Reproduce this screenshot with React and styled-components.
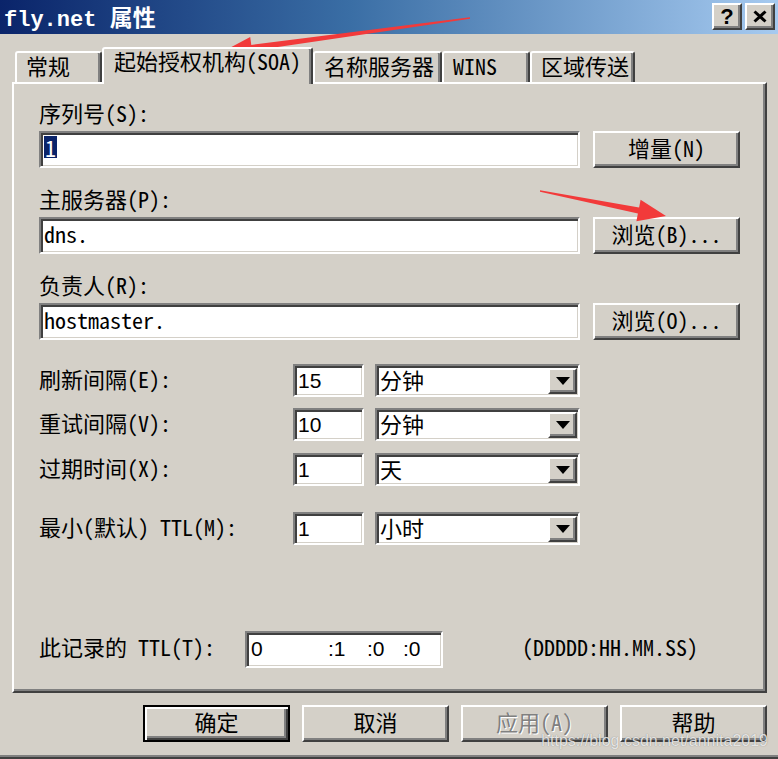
import React from 'react'
import styled, { createGlobalStyle, css } from 'styled-components'

const MONO = `"Noto Sans Mono CJK SC", "Liberation Mono", "Noto Sans CJK SC", monospace`
const SANS = `"Liberation Sans", "Noto Sans CJK SC", sans-serif`

const GlobalStyle = createGlobalStyle`
  * { box-sizing: border-box; }
  body { margin: 0; background: #d4d0c8; }
`

const raised = css`
  border: 2px solid;
  border-color: #ffffff #404040 #404040 #ffffff;
  box-shadow: inset -2px -2px #808080;
  background: #d4d0c8;
`

const sunken = css`
  border: 2px solid;
  border-color: #808080 #ffffff #ffffff #808080;
  box-shadow: inset 2px 2px #404040, inset -1px -1px #d4d0c8;
  background: #ffffff;
`

// the CJK face sits a few px low in its box, lift it
const lift = css`
  padding-bottom: 6px;
`

const Window = styled.div`
  position: relative;
  width: 778px;
  height: 759px;
  overflow: hidden;
  background: #d4d0c8;
  color: #000;
  font-family: ${MONO};
  font-size: 22px;
  box-shadow: inset 0 -2px #404040, inset 0 -4px #808080;
`

const TitleBar = styled.div`
  height: 34px;
  display: flex;
  align-items: flex-start;
  justify-content: space-between;
  padding: 0 3px 0 4px;
  background: linear-gradient(to right, #0a246a 0%, #3a6ea5 45%, #a6caf0 100%);
`

const Title = styled.div`
  color: #fff;
  font-family: "Liberation Mono", "Noto Sans CJK SC", monospace;
  font-weight: bold;
  font-size: 22px;
  line-height: 34px;
  padding-top: 3px;
  white-space: nowrap;
`

const TitleCjk = styled.span`
  font-size: 23px;
`

const CapButtons = styled.div`
  display: flex;
  gap: 3px;
  margin-top: 3px;
`

const CapButton = styled.div`
  ${raised};
  width: 30px;
  height: 27px;
  display: flex;
  align-items: center;
  justify-content: center;
  font-family: ${SANS};
  font-weight: bold;
  font-size: 22px;
`

const Body = styled.div`
  padding: 0 11px 0 12px;
`

const TabStrip = styled.div`
  display: flex;
  align-items: flex-end;
  height: 48px;
  padding-left: 3px;
`

const Tab = styled.div`
  position: relative;
  z-index: ${p => (p.$active ? 2 : 0)};
  width: ${p => p.$w}px;
  height: ${p => (p.$active ? 37 : 31)}px;
  margin-bottom: ${p => (p.$active ? -2 : 0)}px;
  padding: ${p => (p.$active ? 0 : 1)}px 0 0 ${p => (p.$active ? 10 : 9)}px;
  border: 2px solid;
  border-bottom: none;
  border-color: #ffffff #404040 transparent #ffffff;
  border-radius: 3px 3px 0 0;
  box-shadow: inset -2px 0 #808080;
  background: #d4d0c8;
  line-height: 22px;
  white-space: nowrap;
`

const Panel = styled.div`
  height: 611px;
  border: 2px solid;
  border-color: #ffffff #404040 #404040 #ffffff;
  box-shadow: inset -2px -2px #808080;
  padding: 19px 0 0 25px;
`

const Block = styled.div`
  margin-top: ${p => p.$top || 0}px;
`

const Label = styled.div`
  height: 24px;
  line-height: 18px;
  white-space: nowrap;
`

const FieldRow = styled.div`
  display: flex;
  gap: 13px;
  margin-top: 4px;
`

const TextBox = styled.div`
  ${sunken};
  ${lift};
  width: 541px;
  height: 37px;
  display: flex;
  align-items: center;
  padding-left: 3px;
  white-space: pre;
`

const Selected = styled.span`
  background: #0a246a;
  color: #fff;
  line-height: 22px;
  padding: 0 1px;
`

const Button = styled.div`
  ${raised};
  ${lift};
  width: 147px;
  height: 37px;
  display: flex;
  align-items: center;
  justify-content: center;
  white-space: nowrap;
  ${p => p.$default && css`
    border: 2px solid #000;
    box-shadow: inset 2px 2px #ffffff, inset -2px -2px #404040, inset -4px -4px #808080;
  `}
  ${p => p.$disabled && css`
    color: #808080;
    text-shadow: 1px 1px #ffffff;
  `}
`

const NumRow = styled.div`
  display: flex;
  align-items: center;
  height: 33px;
  margin-top: ${p => p.$top}px;
`

const NumLabel = styled.div`
  ${lift};
  width: 254px;
  white-space: nowrap;
`

const SmallBox = styled.div`
  ${sunken};
  width: 71px;
  height: 33px;
  display: flex;
  align-items: center;
  padding-left: 3px;
  font-family: ${SANS};
  font-size: 21px;
`

const Select = styled.div`
  ${sunken};
  width: 205px;
  height: 33px;
  margin-left: 11px;
  display: flex;
  align-items: stretch;
  padding: 2px 1px 1px 3px;
`

const SelectText = styled.div`
  flex: 1;
  display: flex;
  align-items: center;
  padding-bottom: 4px;
`

const DropButton = styled.div`
  ${raised};
  width: 29px;
  display: flex;
  align-items: center;
  justify-content: center;
`

const TtlRow = styled.div`
  display: flex;
  align-items: center;
  margin-top: 85px;
`

const TtlLabel = styled.div`
  ${lift};
  width: 206px;
  white-space: nowrap;
`

const TtlBox = styled.div`
  ${sunken};
  width: 198px;
  height: 37px;
  display: flex;
  align-items: center;
  padding-left: 4px;
  font-family: ${SANS};
  font-size: 21px;
`

const Segment = styled.span`
  display: inline-block;
  width: ${p => p.$w}px;
`

const Format = styled.div`
  ${lift};
  margin-left: 79px;
  white-space: nowrap;
`

const Footer = styled.div`
  display: flex;
  justify-content: flex-end;
  gap: 12px;
  margin-top: 12px;
`

const Overlay = styled.svg`
  position: absolute;
  left: 0;
  top: 0;
  pointer-events: none;
`

const Watermark = styled.div`
  position: absolute;
  right: 10px;
  bottom: 9px;
  font-family: ${SANS};
  font-size: 16px;
  color: rgba(255, 255, 255, 0.8);
  text-shadow: 0 0 1px rgba(60, 60, 60, 0.6);
  pointer-events: none;
`

const Arrow = () => (
  <svg width="14" height="8" viewBox="0 0 14 8">
    <path d="M0 0h14L7 8z" fill="#000" />
  </svg>
)

const units = [
  { label: '刷新间隔(E):', value: '15', unit: '分钟', top: 24 },
  { label: '重试间隔(V):', value: '10', unit: '分钟', top: 11 },
  { label: '过期时间(X):', value: '1', unit: '天', top: 12 },
  { label: '最小(默认) TTL(M):', value: '1', unit: '小时', top: 26 },
]

const tabs = [
  { name: '常规', w: 87 },
  { name: '起始授权机构(SOA)', w: 211, active: true },
  { name: '名称服务器', w: 129 },
  { name: 'WINS', w: 88 },
  { name: '区域传送', w: 105 },
]

export default function App() {
  return (
    <Window>
      <GlobalStyle />
      <TitleBar>
        <Title>fly.net <TitleCjk>属性</TitleCjk></Title>
        <CapButtons>
          <CapButton>?</CapButton>
          <CapButton>
            <svg width="14" height="13" viewBox="0 0 14 13">
              <path d="M1.5 1.5l11 10M12.5 1.5l-11 10" stroke="#000" strokeWidth="3" />
            </svg>
          </CapButton>
        </CapButtons>
      </TitleBar>
      <Body>
        <TabStrip>
          {tabs.map(t => (
            <Tab key={t.name} $w={t.w} $active={t.active}>{t.name}</Tab>
          ))}
        </TabStrip>
        <Panel>
          <Block>
            <Label>序列号(S):</Label>
            <FieldRow>
              <TextBox><Selected>1</Selected></TextBox>
              <Button>增量(N)</Button>
            </FieldRow>
          </Block>
          <Block $top={21}>
            <Label>主服务器(P):</Label>
            <FieldRow>
              <TextBox>dns.</TextBox>
              <Button>浏览(B)...</Button>
            </FieldRow>
          </Block>
          <Block $top={21}>
            <Label>负责人(R):</Label>
            <FieldRow>
              <TextBox>hostmaster.</TextBox>
              <Button>浏览(O)...</Button>
            </FieldRow>
          </Block>
          {units.map(u => (
            <NumRow key={u.label} $top={u.top}>
              <NumLabel>{u.label}</NumLabel>
              <SmallBox>{u.value}</SmallBox>
              <Select>
                <SelectText>{u.unit}</SelectText>
                <DropButton><Arrow /></DropButton>
              </Select>
            </NumRow>
          ))}
          <TtlRow>
            <TtlLabel>此记录的 TTL(T):</TtlLabel>
            <TtlBox>
              <Segment $w={77}>0</Segment>
              <Segment $w={39}>:1</Segment>
              <Segment $w={36}>:0</Segment>
              <Segment $w={30}>:0</Segment>
            </TtlBox>
            <Format>(DDDDD:HH.MM.SS)</Format>
          </TtlRow>
        </Panel>
        <Footer>
          <Button $default>确定</Button>
          <Button>取消</Button>
          <Button $disabled>应用(A)</Button>
          <Button>帮助</Button>
        </Footer>
      </Body>
      <Overlay width="778" height="759" viewBox="0 0 778 759">
        <polygon
          fill="#f23a3a"
          points="470,17.3 251.3,44.9 250.2,37 222,52 253.2,58.8 252.1,50.9 470,18.7"
        />
        <polygon
          fill="#f23a3a"
          points="540,190.3 639.1,207.6 640.6,199.7 666,216 636.4,221.3 637.9,213.4 540,191.7"
        />
      </Overlay>
      <Watermark>https://blog.csdn.net/annita2019</Watermark>
    </Window>
  )
}
